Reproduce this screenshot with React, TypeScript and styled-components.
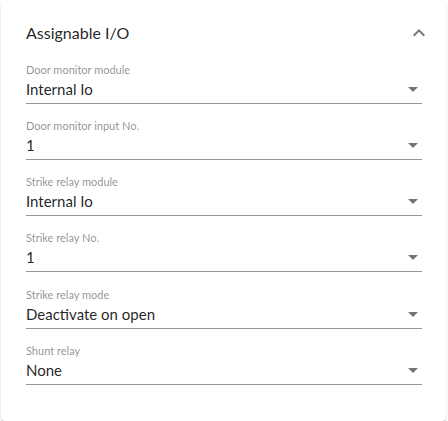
import { FC } from "react";
import styled, { createGlobalStyle } from "styled-components";

const GlobalStyle = createGlobalStyle`
  html, body {
    margin: 0;
    padding: 0;
    background: #ffffff;
  }
  body {
    font-family: Lato, "Open Sans", "Liberation Sans", sans-serif;
    color: rgba(0, 0, 0, 0.87);
  }
`;

const Page = styled.div`
  padding: 1px 2px 1px 1px;
`;

const Card = styled.section`
  width: 445px;
  min-height: 419px;
  box-sizing: border-box;
  background: #fff;
  border-radius: 4px;
  box-shadow: 0px 2px 1px -1px rgba(0, 0, 0, 0.2),
    0px 1px 1px 0px rgba(0, 0, 0, 0.14), 0px 1px 3px 0px rgba(0, 0, 0, 0.12);
  padding: 20px 24px 36px 25px;
`;

const Header = styled.div`
  display: flex;
  align-items: center;
  justify-content: space-between;
  height: 24px;
`;

const Title = styled.h2`
  margin: 0;
  font-size: 16px;
  font-weight: 400;
  line-height: 24px;
  color: rgba(0, 0, 0, 0.87);
`;

const ToggleIcon = styled.svg`
  width: 24px;
  height: 24px;
  margin-right: -9px;
  fill: rgba(0, 0, 0, 0.54);
`;

const Fields = styled.div`
  display: flex;
  flex-direction: column;
  gap: 15.25px;
  margin-top: 17.5px;
`;

const Field = styled.div`
  display: flex;
  flex-direction: column;
  gap: 2px;
`;

const Label = styled.label`
  font-size: 11px;
  line-height: 14px;
  color: rgba(0, 0, 0, 0.46);
`;

const SelectRow = styled.div`
  display: flex;
  align-items: center;
  justify-content: space-between;
  height: 20px;
  padding-bottom: 4px;
  border-bottom: 1px solid rgba(0, 0, 0, 0.42);
`;

const Value = styled.span`
  font-size: 15px;
  line-height: 20px;
  color: rgba(0, 0, 0, 0.87);
`;

const Arrow = styled.svg`
  width: 10px;
  height: 5px;
  margin-right: 4px;
  margin-top: 1px;
  fill: rgba(0, 0, 0, 0.54);
`;

interface SelectFieldProps {
  label: string;
  value: string;
}

const SelectField: FC<SelectFieldProps> = ({ label, value }) => (
  <Field>
    <Label>{label}</Label>
    <SelectRow>
      <Value>{value}</Value>
      <Arrow viewBox="7 10 10 5">
        <path d="M7 10l5 5 5-5z" />
      </Arrow>
    </SelectRow>
  </Field>
);

const fields: SelectFieldProps[] = [
  { label: "Door monitor module", value: "Internal Io" },
  { label: "Door monitor input No.", value: "1" },
  { label: "Strike relay module", value: "Internal Io" },
  { label: "Strike relay No.", value: "1" },
  { label: "Strike relay mode", value: "Deactivate on open" },
  { label: "Shunt relay", value: "None" },
];

const App: FC = () => {
  return (
    <>
      <GlobalStyle />
      <Page>
        <Card>
          <Header>
            <Title>Assignable I/O</Title>
            <ToggleIcon viewBox="0 0 24 24">
              <path d="M12 8l-6 6 1.41 1.41L12 10.83l4.59 4.58L18 14z" />
            </ToggleIcon>
          </Header>
          <Fields>
            {fields.map((f) => (
              <SelectField key={f.label} label={f.label} value={f.value} />
            ))}
          </Fields>
        </Card>
      </Page>
    </>
  );
};

export default App;
